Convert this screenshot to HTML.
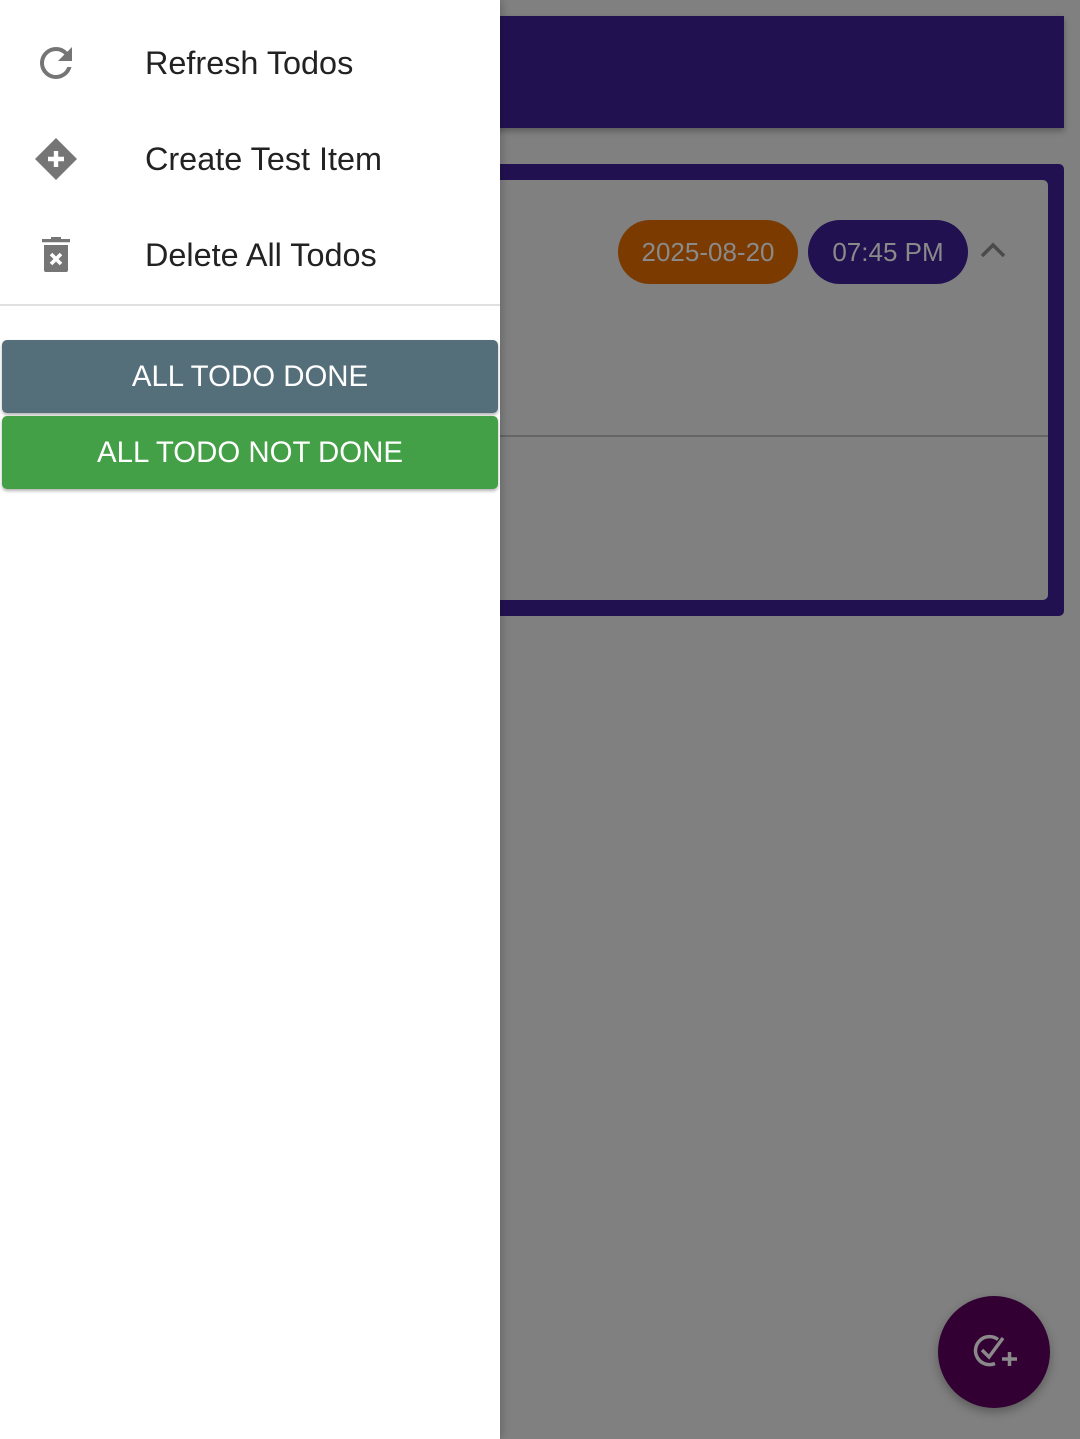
<!DOCTYPE html>
<html><head><meta charset="utf-8"><style>
*{margin:0;padding:0;box-sizing:border-box}
body{width:1080px;height:1439px;background:#808080;position:relative;overflow:hidden;font-family:"Liberation Sans",sans-serif}
.abs{position:absolute}
.chip{position:absolute;top:220px;height:64px;border-radius:32px;color:#8a8a8a;font-size:26px;line-height:64px;text-align:center}
.item{position:absolute;left:0;width:500px;height:96px}
.item span{position:absolute;left:145px;top:0;line-height:96px;font-size:32.4px;color:#222}
.item svg{position:absolute;left:32px;top:24px}
.btn{position:absolute;left:2px;width:496px;height:73px;border-radius:5px;color:#fff;font-size:29.4px;text-align:center;line-height:73px;box-shadow:0 2px 3px rgba(0,0,0,.3)}
</style></head><body>
<div class="abs" style="left:0;top:16px;width:1064px;height:112px;background:#221150;box-shadow:0 3px 6px rgba(0,0,0,.3)"></div>
<div class="abs" style="left:0;top:164px;width:1064px;height:452px;background:#221150;border-radius:5px"></div>
<div class="abs" style="left:0;top:180px;width:1048px;height:420px;background:#808080;border-radius:5px"></div>
<div class="abs" style="left:0;top:435px;width:1048px;height:2px;background:#666"></div>
<div class="chip" style="left:618px;width:180px;background:#7a3a00">2025-08-20</div>
<div class="chip" style="left:808px;width:160px;background:#221150">07:45 PM</div>
<svg class="abs" style="left:980px;top:240px" width="26" height="20" viewBox="0 0 26 20" fill="none" stroke="#4a4a4a" stroke-width="3.5"><path d="M2 16 13 5l11 11"/></svg>
<div class="abs" style="left:938px;top:1296px;width:112px;height:112px;border-radius:50%;background:#330033;box-shadow:0 4px 10px rgba(0,0,0,.3)"></div>
<svg class="abs" style="left:970px;top:1328px" width="50" height="50" viewBox="0 0 50 50" fill="none" stroke="#8a8a8a" stroke-width="3.5"><path d="M28 11.5A14 14 0 1 0 25 35.5"/><path d="M12 22l7 7 14-19"/><path d="M32 31h15M39.5 24v14"/></svg>
<div class="abs" style="left:0;top:0;width:500px;height:1439px;background:#fff;box-shadow:2px 0 8px rgba(0,0,0,.2)"></div>
<div class="item" style="top:15px"><svg width="48" height="48" viewBox="0 0 24 24"><path fill="#757575" d="M17.65 6.35A7.96 7.96 0 0 0 12 4a8 8 0 1 0 7.73 10h-2.08A6 6 0 1 1 12 6c1.66 0 3.14.69 4.22 1.78L13 11h7V4z"/></svg><span>Refresh Todos</span></div>
<div class="item" style="top:111px"><svg width="48" height="48" viewBox="0 0 24 24"><path fill="#757575" d="M12 1.5 22.5 12 12 22.5 1.5 12z"/><path stroke="#fff" stroke-width="2.2" d="M12 8v8M8 12h8"/></svg><span>Create Test Item</span></div>
<div class="item" style="top:207px"><svg width="48" height="48" viewBox="0 0 24 24"><path fill="#757575" d="M5 4h14v1.6H5zM9.5 3h5v1.5h-5zM6 7h12v12.5q0 1-1 1H7q-1 0-1-1z"/><path stroke="#fff" stroke-width="1.8" d="M9.5 11.5l5 5M14.5 11.5l-5 5"/></svg><span>Delete All Todos</span></div>
<div class="abs" style="left:0;top:304px;width:500px;height:2px;background:#e0e0e0"></div>
<div class="btn" style="top:340px;background:#546e7a">ALL TODO DONE</div>
<div class="btn" style="top:416px;background:#43a047">ALL TODO NOT DONE</div>
</body></html>
